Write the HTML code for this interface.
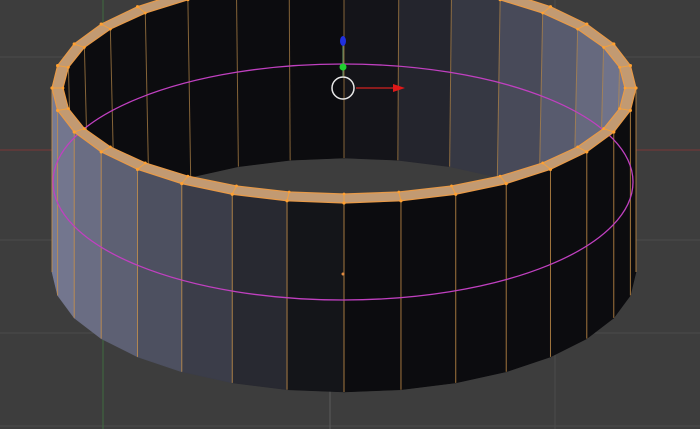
<!DOCTYPE html>
<html><head><meta charset="utf-8"><style>
html,body{margin:0;padding:0;background:#3d3d3d;overflow:hidden}
svg{display:block}
</style></head><body>
<svg id="s" width="700" height="429" viewBox="0 0 700 429" xmlns="http://www.w3.org/2000/svg">
<rect width="700" height="429" fill="#3d3d3d"/>
<g stroke="#4a4a4a" stroke-width="1">
<line x1="0" y1="57" x2="700" y2="57"/>
<line x1="0" y1="240" x2="700" y2="240"/>
<line x1="0" y1="333" x2="700" y2="333"/>
<line x1="0" y1="426" x2="700" y2="426"/>
<line x1="555" y1="0" x2="555" y2="429"/>
</g>
<line x1="0" y1="150" x2="700" y2="150" stroke="#7a3838" stroke-width="1"/>
<line x1="103" y1="0" x2="103" y2="429" stroke="#3f6a3f" stroke-width="1"/>
<line x1="330" y1="215" x2="330" y2="429" stroke="#5a5a5a" stroke-width="1"/>
<g id="geo"></g>
</svg>
<script>
(function(){
var g=document.getElementById('geo');
var cx=344,cy=88,rx=292,ry=115,irx=281,iry=106,N=32;
var bcy=272,bry=120,biry=114,birx=276;
var out='';
function lerp(a,b,t){return Math.round(a+(b-a)*t);}
function col(i,p){var t=Math.pow(Math.max(0,Math.min(1,i)),p||1);
 return 'rgb('+lerp(12,126,t)+','+lerp(12,130,t)+','+lerp(15,156,t)+')';}
function T(a,R,Ry,back){return [cx+R*Math.cos(a), cy+(back?-1:1)*Ry*Math.sin(a)];}
function B(a,R,Ry,back){return [cx+R*Math.cos(a), bcy+(back?-1:1)*Ry*Math.sin(a)];}
var step=2*Math.PI/N;
function quad(p0,p1,q1,q0,c){return '<polygon fill="'+c+'" stroke="'+c+'" stroke-width="0.6" points="'+p0+' '+p1+' '+q1+' '+q0+'"/>';}
// inner back wall
for(var k=0;k<N/2;k++){
 var a0=k*step,a1=(k+1)*step,am=(a0+a1)/2;
 var i=Math.cos(am);
 out+=quad(T(a0,irx,iry,1),T(a1,irx,iry,1),B(a1,birx,biry,1),B(a0,birx,biry,1),col(i*0.9+0.04,1.3));
}
for(var k=0;k<=N/2;k++){var p=T(k*step,irx,iry,1),q=B(k*step,birx,biry,1);
 out+='<line x1="'+p[0]+'" y1="'+p[1]+'" x2="'+q[0]+'" y2="'+q[1]+'" stroke="#b98a4a" stroke-opacity="0.7" stroke-width="1"/>';}
// outer front wall
for(var k=0;k<N/2;k++){
 var a0=k*step,a1=(k+1)*step,am=(a0+a1)/2;
 var i=-Math.cos(am);
 var c=col(i*0.95+(am<0.9?0.15:0),1.1);
 out+=quad(T(a0,rx,ry,0),T(a1,rx,ry,0),B(a1,rx,bry,0),B(a0,rx,bry,0),c);
}
for(var k=0;k<=N/2;k++){var p=T(k*step,rx,ry,0),q=B(k*step,rx,bry,0);
 out+='<line x1="'+p[0]+'" y1="'+p[1]+'" x2="'+q[0]+'" y2="'+q[1]+'" stroke="#c9914a" stroke-opacity="0.8" stroke-width="1"/>';}
out+='<ellipse cx="'+(cx-1)+'" cy="182" rx="'+(rx-2)+'" ry="118" fill="none" stroke="#c040c0" stroke-width="1.3"/>';
var oF='',iF='';
for(var k=0;k<=N;k++){var p=T(k*step,rx,ry,0);oF+=(k?'L':'M')+p[0]+','+p[1];}
for(var k=N;k>=0;k--){var q=T(k*step,irx,iry,0);iF+='L'+q[0]+','+q[1];}
out+='<path d="'+oF+iF+'Z" fill="#c29a72" fill-rule="evenodd" stroke="#e89a48" stroke-width="1.2"/>';
for(var k=0;k<N;k++){var p=T(k*step,rx,ry,0),q=T(k*step,irx,iry,0);
 out+='<line x1="'+p[0]+'" y1="'+p[1]+'" x2="'+q[0]+'" y2="'+q[1]+'" stroke="#f0a040" stroke-width="1"/>';
 out+='<circle cx="'+p[0]+'" cy="'+p[1]+'" r="1.6" fill="#ffa030"/><circle cx="'+q[0]+'" cy="'+q[1]+'" r="1.4" fill="#ffa030"/>';}
out+='<line x1="343" y1="45" x2="343" y2="76" stroke="#6a9a6a" stroke-width="1"/>';
out+='<ellipse cx="343" cy="41" rx="3" ry="5" fill="#2030e0"/>';
out+='<circle cx="343" cy="67" r="3.5" fill="#20d030"/>';
out+='<circle cx="343" cy="88" r="11" fill="none" stroke="#e8e8e8" stroke-width="1.5"/>';
out+='<line x1="356" y1="88" x2="395" y2="88" stroke="#d02020" stroke-width="1.2"/>';
out+='<polygon points="393,84 405,88 393,92" fill="#e01818"/>';
out+='<circle cx="343" cy="274" r="1.5" fill="#e08a40"/>';
g.innerHTML=out;
})();
</script>
</body></html>
